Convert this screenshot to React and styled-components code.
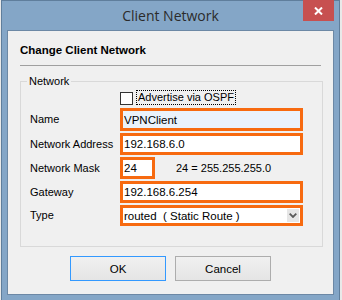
import styled, { createGlobalStyle } from 'styled-components';

const GlobalStyle = createGlobalStyle`
  html, body {
    margin: 0;
    padding: 0;
    background: #e9e9e9;
    overflow: hidden;
  }
  body {
    font-family: "Liberation Sans", Arial, sans-serif;
    font-size: 11px;
    color: #000;
  }
`;

const App = () => {
  return (
    <>
      <GlobalStyle />
      <Window>
        <TitleBar>
          <Title>Client Network</Title>
          <CloseButton>
            <svg width="9" height="8" viewBox="0 0 9 8">
              <path d="M1 0.5L8 7.5M8 0.5L1 7.5" stroke="#fff" strokeWidth="2" />
            </svg>
          </CloseButton>
        </TitleBar>
        <Client>
          {/* 상단 제목 */}
          <Heading>Change Client Network</Heading>
          <Separator />
          <GroupBox>
            <Legend>Network</Legend>
            <FormGrid>
              <span />
              <CheckRow>
                <CheckBox />
                <FocusLabel>Advertise via OSPF</FocusLabel>
              </CheckRow>

              <Label>Name</Label>
              <TextBox $tint defaultValue="VPNClient" readOnly />

              <Label>Network Address</Label>
              <TextBox defaultValue="192.168.6.0" readOnly />

              <Label>Network Mask</Label>
              <MaskRow>
                <TextBox $width={35} defaultValue="24" readOnly />
                <MaskHint>24 = 255.255.255.0</MaskHint>
              </MaskRow>

              <Label>Gateway</Label>
              <TextBox defaultValue="192.168.6.254" readOnly />

              <Label>Type</Label>
              <SelectBox>
                <SelectText>routed  ( Static Route )</SelectText>
                <ArrowBox>
                  <svg width="8" height="5" viewBox="0 0 8 5">
                    <path d="M0.7 0.7L4 4L7.3 0.7" stroke="#5a5a5a" strokeWidth="1.8" fill="none" />
                  </svg>
                </ArrowBox>
              </SelectBox>
            </FormGrid>
          </GroupBox>
          <ButtonRow>
            <Button $primary>OK</Button>
            <Button>Cancel</Button>
          </ButtonRow>
        </Client>
      </Window>
    </>
  );
};

const Window = styled.div`
  box-sizing: border-box;
  width: 339px;
  height: 302px;
  margin-left: 1px;
  border: 1px solid #5f7e9c;
  background: #84a6c7;
`;

const TitleBar = styled.div`
  position: relative;
  height: 29px;
  display: flex;
  align-items: center;
  justify-content: center;
`;

const Title = styled.div`
  font-family: "Open Sans", "Noto Sans", sans-serif;
  font-size: 14px;
  color: #2b2b2b;
`;

const CloseButton = styled.div`
  position: absolute;
  top: -1px;
  right: 5px;
  width: 31px;
  height: 21px;
  background: #c75050;
  display: flex;
  align-items: center;
  justify-content: center;
`;

const Client = styled.div`
  height: 263px;
  margin: 0 5px;
  border: 1px solid #6c88a5;
  background: #f0f0f0;
  display: flex;
  flex-direction: column;
`;

const Heading = styled.div`
  padding: 13px 12px 0;
  font-weight: bold;
  font-size: 11.5px;
  line-height: 13px;
`;

const Separator = styled.div`
  height: 1px;
  margin: 8px 12px 0;
  background: #a0a0a0;
`;

const GroupBox = styled.fieldset`
  margin: 9px 10px 0 12px;
  padding: 1px 19px 20px 9px;
  border: 1px solid #d9d9d9;
  min-width: 0;
`;

const Legend = styled.legend`
  margin-left: -3px;
  padding: 0 2px;
  line-height: 13px;
`;

const FormGrid = styled.div`
  display: grid;
  grid-template-columns: 90px 1fr;
  grid-template-rows: 17px 23px 22px 22px 22px 21px;
  row-gap: 2px;
  align-items: center;
`;

const Label = styled.span`
  line-height: 13px;
`;

const CheckRow = styled.div`
  display: flex;
  align-items: center;
  gap: 3px;
  height: 100%;
`;

const CheckBox = styled.span`
  box-sizing: border-box;
  width: 13px;
  height: 13px;
  margin-top: 2px;
  border: 1px solid #333;
  background: #fff;
`;

const FocusLabel = styled.span`
  border: 1px dotted #000;
  padding: 0 1px;
  line-height: 13px;
`;

const TextBox = styled.input`
  box-sizing: border-box;
  width: ${(p) => (p.$width ? `${p.$width}px` : '100%')};
  height: 100%;
  margin: 0;
  padding: 0 1px;
  border: 3px solid #f76a10;
  border-radius: 0;
  outline: none;
  background: ${(p) => (p.$tint ? '#eaf2fb' : '#fff')};
  font-family: "Liberation Sans", Arial, sans-serif;
  font-size: 11.5px;
  color: #000;
`;

const MaskRow = styled.div`
  display: flex;
  align-items: center;
  gap: 21px;
  height: 100%;
`;

const MaskHint = styled.span`
  line-height: 13px;
`;

const SelectBox = styled.div`
  box-sizing: border-box;
  height: 100%;
  border: 3px solid #f76a10;
  background: #fff;
  display: flex;
  align-items: center;
  padding: 0 1px 0 1px;
`;

const SelectText = styled.span`
  flex: 1;
  white-space: pre;
  font-size: 11.5px;
`;

const ArrowBox = styled.span`
  width: 12px;
  height: 13px;
  background: #e6e6e6;
  display: flex;
  align-items: center;
  justify-content: center;
`;

const ButtonRow = styled.div`
  display: flex;
  justify-content: center;
  gap: 9px;
  margin-top: 9px;
`;

const Button = styled.button`
  box-sizing: border-box;
  width: 96px;
  height: 25px;
  padding: 0;
  border: 1px solid ${(p) => (p.$primary ? '#3399ff' : '#adadad')};
  background: linear-gradient(#f0f0f0, #e5e5e5);
  font-family: "Liberation Sans", Arial, sans-serif;
  font-size: 11.5px;
  color: #000;
`;

export default App;
